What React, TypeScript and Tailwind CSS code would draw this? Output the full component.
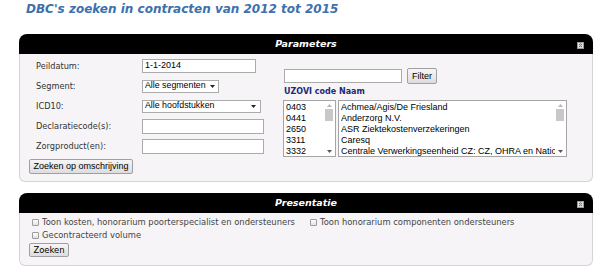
const codes = ["0403", "0441", "2650", "3311", "3332"];
const names = [
  "Achmea/Agis/De Friesland",
  "Anderzorg N.V.",
  "ASR Ziektekostenverzekeringen",
  "Caresq",
  "Centrale Verwerkingseenheid CZ: CZ, OHRA en Nationale-Nederlanden",
];

const CollapseIcon = () => (
  <svg className="absolute right-[9px] top-[8px]" width="7" height="7" viewBox="0 0 7 7">
    <rect x="0.5" y="0.5" width="6" height="6" fill="#e4e4e4" stroke="#9a9a9a" />
    <path d="M2 3 L3.5 1.8 L5 3 M2 5 L3.5 3.8 L5 5" fill="none" stroke="#444" strokeWidth="0.8" />
  </svg>
);

const Panel = ({ title, bodyClass, children }: { title: string; bodyClass: string; children: React.ReactNode }) => (
  <div className="w-[574px] ml-[19px]">
    <div className="relative h-[20px] bg-black rounded-t-[8px] flex items-center justify-center">
      <span className="text-white font-bold italic text-[9.5px] leading-none font-['DejaVu_Sans',Verdana,sans-serif]">
        {title}
      </span>
      <CollapseIcon />
    </div>
    <div className={"bg-[#f6f4f6] border border-t-0 border-[#d6d3d6] rounded-b-[6px] " + bodyClass}>{children}</div>
  </div>
);

const Arrow = ({ up, color }: { up?: boolean; color: string }) => (
  <svg width="5" height="3" viewBox="0 0 5 3" className="shrink-0">
    <path d={up ? "M0 3 L2.5 0 L5 3 Z" : "M0 0 L2.5 3 L5 0 Z"} fill={color} />
  </svg>
);

const ListBox = ({ items, width }: { items: string[]; width: string }) => (
  <div className={"h-[57px] border border-[#a5a5a5] bg-white flex " + width}>
    <div className="flex-1 min-w-0 pl-[2px] pt-[1px] overflow-hidden">
      {items.map((t) => (
        <div key={t} className="h-[11px] leading-[11px] text-[9px] text-black whitespace-nowrap overflow-hidden font-['Liberation_Sans',Arial,sans-serif]">
          {t}
        </div>
      ))}
    </div>
    <div className="w-[10px] flex flex-col items-center mr-[1px]">
      <div className="h-[8px] flex items-center">
        <Arrow up color="#b5b5b5" />
      </div>
      <div className="w-[8px] h-[12px] bg-[#c8c8c8]" />
      <div className="flex-1" />
      <div className="h-[9px] flex items-center">
        <Arrow color="#555" />
      </div>
    </div>
  </div>
);

const Row = ({ label, children }: { label: string; children: React.ReactNode }) => (
  <div className="flex items-center h-[20px] pl-[7px]">
    <span className="w-[106px] shrink-0 text-[8.2px] text-[#333] whitespace-nowrap font-['DejaVu_Sans',Verdana,sans-serif]">{label}</span>
    {children}
  </div>
);

const TextBox = ({ w, h, value }: { w: string; h: string; value?: string }) => (
  <div className={"bg-white border border-[#ababab] flex items-center pl-[2px] text-[9px] text-black whitespace-nowrap font-['Liberation_Sans',Arial,sans-serif] " + w + " " + h}>
    {value}
  </div>
);

const Select = ({ w, value }: { w: string; value: string }) => (
  <div className={"h-[13px] shrink-0 bg-white border border-[#ababab] flex items-center justify-between gap-[4px] pl-[2px] pr-[4px] text-[8.8px] text-black whitespace-nowrap font-['Liberation_Sans',Arial,sans-serif] " + w}>
    <span>{value}</span>
    <Arrow color="#222" />
  </div>
);

const Check = ({ label, w }: { label: string; w?: string }) => (
  <div className={"flex items-center h-[13px] " + (w ?? "")}>
    <span className="ml-[3px] w-[7px] h-[7px] border border-[#9c9c9c] rounded-[1px] bg-gradient-to-b from-white to-[#e2e2e2]" />
    <span className="ml-[3px] text-[8.4px] text-[#444] whitespace-nowrap font-['DejaVu_Sans',Verdana,sans-serif]">{label}</span>
  </div>
);

export default function App() {
  return (
    <div className="w-[605px] h-[273px] bg-white overflow-hidden">
      <div className="h-[34px] pl-[26px] pt-[2px]">
        <h1 className="text-[12px] leading-[14px] font-bold italic text-[#3d70ac] font-['DejaVu_Sans',Verdana,sans-serif]">
          DBC's zoeken in contracten van 2012 tot 2015
        </h1>
      </div>

      <Panel title="Parameters" bodyClass="h-[128px] flex">
        <div className="w-[263px] pl-[9px] pt-[2px]">
          <Row label="Peildatum:">
            <TextBox w="w-[114px]" h="h-[14px]" value="1-1-2014" />
          </Row>
          <Row label="Segment:">
            <Select w="w-[77px]" value="Alle segmenten" />
          </Row>
          <Row label="ICD10:">
            <Select w="w-[119px]" value="Alle hoofdstukken" />
          </Row>
          <Row label="Declaratiecode(s):">
            <TextBox w="w-[122px]" h="h-[15px]" />
          </Row>
          <Row label="Zorgproduct(en):">
            <TextBox w="w-[122px]" h="h-[15px]" />
          </Row>
          <button className="block mt-[3px] w-[104px] h-[15px] border border-[#a0a0a0] rounded-[2px] bg-gradient-to-b from-[#f6f6f6] to-[#dddddd] text-[9px] leading-none text-black whitespace-nowrap font-['Liberation_Sans',Arial,sans-serif]">
            Zoeken op omschrijving
          </button>
        </div>

        <div className="pt-[14px]">
          <div className="flex items-center h-[16px] ml-[1px]">
            <TextBox w="w-[118px]" h="h-[14px]" />
            <button className="ml-[5px] w-[30px] h-[16px] border border-[#a0a0a0] rounded-[2px] bg-gradient-to-b from-[#f6f6f6] to-[#dddddd] text-[9px] leading-none text-black font-['Liberation_Sans',Arial,sans-serif]">
              Filter
            </button>
          </div>
          <div className="mt-[3px] ml-[1px] h-[10px] leading-[10px] text-[8px] font-bold text-[#202a78] font-['DejaVu_Sans',Verdana,sans-serif]">
            UZOVI code Naam
          </div>
          <div className="mt-[3px] flex gap-[2px]">
            <ListBox items={codes} width="w-[53px]" />
            <ListBox items={names} width="w-[229px]" />
          </div>
        </div>
      </Panel>

      <div className="h-[11px]" />

      <Panel title="Presentatie" bodyClass="h-[53px] pl-[9px] pt-[3px]">
        <div className="flex">
          <Check w="w-[278px]" label="Toon kosten, honorarium poorterspecialist en ondersteuners" />
          <Check label="Toon honorarium componenten ondersteuners" />
        </div>
        <Check label="Gecontracteerd volume" />
        <button className="block mt-[1px] w-[40px] h-[14px] border border-[#a0a0a0] rounded-[2px] bg-gradient-to-b from-[#f6f6f6] to-[#dddddd] text-[8.4px] leading-none text-black font-['DejaVu_Sans',Verdana,sans-serif]">
          Zoeken
        </button>
      </Panel>
    </div>
  );
}
